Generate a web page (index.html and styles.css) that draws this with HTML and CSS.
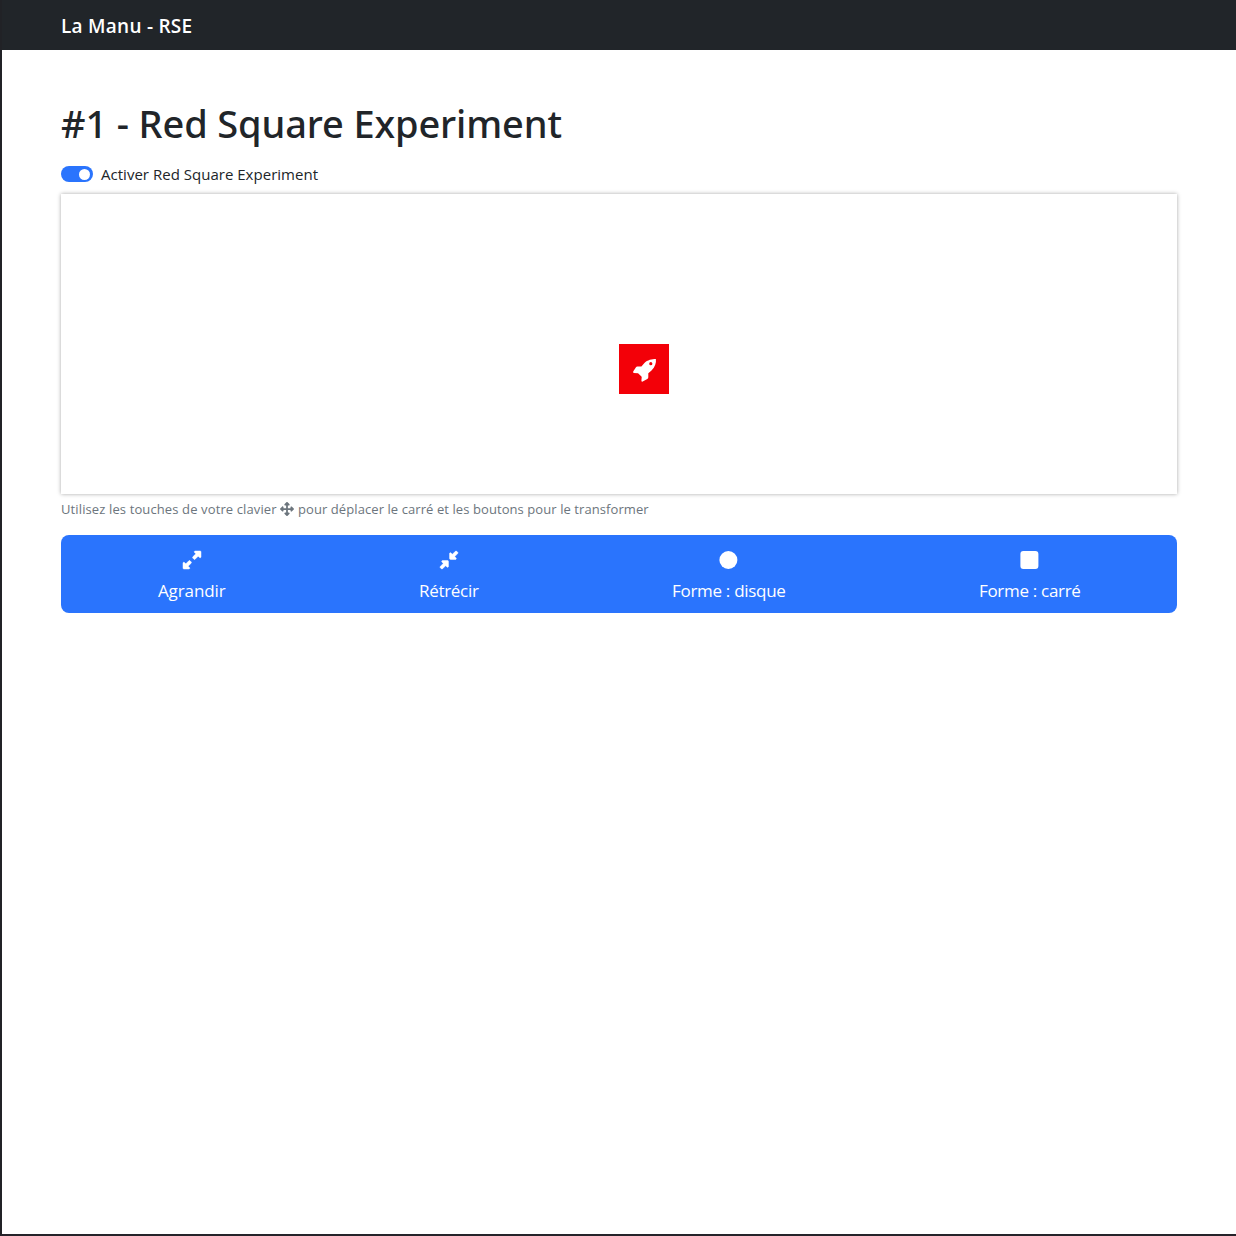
FILE: index.html
```html
<!DOCTYPE html>
<html lang="fr">
<head>
<meta charset="utf-8">
<title>La Manu - RSE</title>
<link rel="stylesheet" href="styles.css">
</head>
<body>
<header class="navbar"><a class="brand">La Manu - RSE</a></header>
<main class="container">
  <h1 class="title"><span>#1 - Red Square Experiment</span></h1>
  <label class="switch-row"><span class="switch"></span><span class="switch-label">Activer Red Square Experiment</span></label>
  <section class="playground">
    <div class="square">
      <svg class="rocket" viewBox="0 0 23 23"><path fill-rule="evenodd" d="M22.9 0C19 0 14.5 .8 11.2 4.2L8.4 7.5H4.4Q3.4 7.5 2.8 8.4L.2 12.6Q-.3 13.7 .9 13.9L5 14.2L5.6 14.7L8.2 17.3L8.7 18L8.4 21.8Q8.6 23 9.7 22.5L14.3 20Q15.3 19.3 15.3 18.2V14.3L18.5 11.5C22.2 8 23.3 3.8 22.9 0ZM17.8 3.1A1.6 1.6 0 1 1 17.8 6.3A1.6 1.6 0 0 1 17.8 3.1Z"/></svg>
    </div>
  </section>
  <p class="help">
    <span class="help-start">Utilisez les touches de votre clavier</span>
    <svg class="move" viewBox="0 0 512 512"><path d="M278.6 9.4c-12.5-12.5-32.8-12.5-45.3 0l-64 64c-9.2 9.2-11.9 22.9-6.9 34.9s16.6 19.8 29.6 19.8h32v96H128V192c0-12.9-7.8-24.6-19.8-29.6s-25.7-2.2-34.9 6.9l-64 64c-12.5 12.5-12.5 32.8 0 45.3l64 64c9.2 9.2 22.9 11.9 34.9 6.9s19.8-16.6 19.8-29.6V288h96v96H192c-12.9 0-24.6 7.8-29.6 19.8s-2.2 25.7 6.9 34.9l64 64c12.5 12.5 32.8 12.5 45.3 0l64-64c9.2-9.2 11.9-22.9 6.9-34.9s-16.6-19.8-29.6-19.8H288V288h96v32c0 12.9 7.8 24.6 19.8 29.6s25.7 2.2 34.9-6.9l64-64c12.5-12.5 12.5-32.8 0-45.3l-64-64c-9.2-9.2-22.9-11.9-34.9-6.9s-19.8 16.6-19.8 29.6v32H288V128h32c12.9 0 24.6-7.8 29.6-19.8s2.2-25.7-6.9-34.9l-64-64z"/></svg>
    <span class="help-end">pour déplacer le carré et les boutons pour le transformer</span>
  </p>
  <nav class="toolbar">
    <a class="tool grow">
      <svg class="icon arrows" viewBox="0 0 512 512"><path d="M344 0H488c13.3 0 24 10.7 24 24V168c0 9.7-5.8 18.5-14.8 22.2s-19.3 1.7-26.2-5.2l-39-39-87 87c-9.4 9.4-24.6 9.4-33.9 0l-32-32c-9.4-9.4-9.4-24.6 0-33.9l87-87L327 41c-6.9-6.9-8.9-17.2-5.2-26.2S334.3 0 344 0zM168 512H24c-13.3 0-24-10.7-24-24V344c0-9.7 5.8-18.5 14.8-22.2s19.3-1.7 26.2 5.2l39 39 87-87c9.4-9.4 24.6-9.4 33.9 0l32 32c9.4 9.4 9.4 24.6 0 33.9l-87 87 39 39c6.9 6.9 8.9 17.2 5.2 26.2s-12.5 14.8-22.2 14.8z"/></svg>
      <span>Agrandir</span>
    </a>
    <a class="tool shrink">
      <svg class="icon arrows" viewBox="0 0 512 512"><path d="M439 7c9.4-9.4 24.6-9.4 33.9 0l32 32c9.4 9.4 9.4 24.6 0 33.9l-87 87 39 39c6.9 6.9 8.9 17.2 5.2 26.2s-12.5 14.8-22.2 14.8H296c-13.3 0-24-10.7-24-24V72c0-9.7 5.8-18.5 14.8-22.2s19.3-1.7 26.2 5.2l39 39L439 7zM72 272H216c13.3 0 24 10.7 24 24V440c0 9.7-5.8 18.5-14.8 22.2s-19.3 1.7-26.2-5.2l-39-39L73 505c-9.4 9.4-24.6 9.4-33.9 0L7 473c-9.4-9.4-9.4-24.6 0-33.9l87-87L55 313c-6.9-6.9-8.9-17.2-5.2-26.2s12.5-14.8 22.2-14.8z"/></svg>
      <span>Rétrécir</span>
    </a>
    <a class="tool disc">
      <svg class="icon" viewBox="0 0 18 18"><circle cx="9.4" cy="9" r="9"/></svg>
      <span>Forme : disque</span>
    </a>
    <a class="tool box">
      <svg class="icon" viewBox="0 0 18 18"><rect x=".4" width="18" height="18" rx="3"/></svg>
      <span>Forme : carré</span>
    </a>
  </nav>
</main>
</body>
</html>
```
FILE: styles.css
```css
* { box-sizing: border-box; }
body {
  margin: 0;
  height: 1236px;
  display: flex;
  flex-direction: column;
  color: #212529;
  background: #fff;
  border-left: 2px solid #212226;
  border-bottom: 2px solid #25232a;
  font-family: "Open Sans", "Noto Sans", sans-serif;
  white-space: nowrap;
}
svg { display: block; fill: currentColor; flex: none; overflow: visible; }
.navbar {
  height: 50px;
  margin-left: -2px;
  padding: 2px 0 0 61px;
  display: flex;
  align-items: center;
  background: #212529;
  color: #fff;
}
.brand { font-size: 19px; font-weight: 600; letter-spacing: .25px; }
.container { padding: 47px 59px 0; }
.title {
  margin: 0 0 9px;
  height: 52px;
  line-height: 52px;
  font-family: "Noto Sans", "Open Sans", sans-serif;
  font-size: 38px;
  font-weight: 500;
  letter-spacing: -.13px;
}
.switch-row { height: 32px; display: flex; align-items: center; gap: 8px; }
.switch {
  width: 32px;
  height: 16px;
  padding: 2.5px 3px;
  border-radius: 8px;
  background: #2a74fd;
  display: flex;
  justify-content: flex-end;
}
.switch::after { content: ""; width: 11px; height: 11px; border-radius: 50%; background: #fff; }
.switch-label { font-size: 15px; letter-spacing: .02px; }
.playground {
  height: 300px;
  margin-top: 4px;
  display: flex;
  box-shadow: 0 0 4px rgba(0, 0, 0, .35);
}
.square {
  width: 50px;
  height: 50px;
  margin: 150px 0 0 558px;
  padding-top: 3px;
  display: flex;
  align-items: center;
  justify-content: center;
  background: #f30008;
  color: #fff;
}
.rocket { width: 23px; height: 23px; }
.help {
  margin: 4px 0 16px;
  height: 21px;
  display: flex;
  align-items: center;
  font-size: 13px;
  color: #6c757d;
}
.help-start { width: 219px; letter-spacing: .12px; }
.help-end { letter-spacing: .08px; }
.move { width: 14px; height: 14px; margin-right: 4px; }
.toolbar {
  height: 78px;
  display: flex;
  justify-content: space-around;
  border-radius: 8px;
  background: #2a74fd;
  color: #fff;
}
.tool {
  padding-top: 16px;
  display: flex;
  flex-direction: column;
  align-items: center;
  gap: 8px;
  font-size: 17px;
  line-height: 27px;
  letter-spacing: -.3px;
}
.icon { width: 18px; height: 18px; margin-right: 1px; }
.arrows { margin-right: 0; stroke: currentColor; stroke-width: 14; }
.grow { width: 68px; letter-spacing: -.1px; }
.shrink { width: 59px; }
.disc { width: 114px; }
.box { width: 101px; }
```
